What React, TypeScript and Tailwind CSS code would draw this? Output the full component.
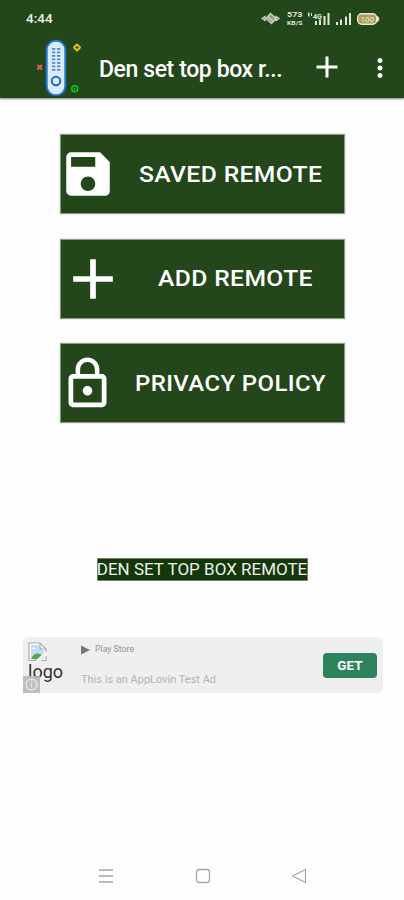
import type { ReactNode } from 'react';
import { MdAdd, MdLockOutline, MdMoreVert, MdSave } from 'react-icons/md';

interface MenuItem {
  label: string;
  icon: ReactNode;
  labelClass: string;
}

const menuItems: MenuItem[] = [
  {
    label: 'SAVED REMOTE',
    icon: <MdSave className="size-[58px] shrink-0" />,
    labelClass: 'ml-[22px] tracking-[0.35px] scale-x-[1.12]',
  },
  {
    label: 'ADD REMOTE',
    icon: <MdAdd className="size-[68px] shrink-0" />,
    labelClass: 'ml-[31px] tracking-[0.35px] scale-x-[1.12]',
  },
  {
    label: 'PRIVACY POLICY',
    icon: <MdLockOutline className="size-[57px] shrink-0" />,
    labelClass: 'ml-[19px] tracking-[0.35px] scale-x-[1.09]',
  },
];

function StatusIcons() {
  return (
    <svg width="122" height="18" viewBox="0 0 122 18" fill="#dfe6da">
      {/* vibrate */}
      <g fill="none" stroke="#cdd6c8" strokeWidth="1.3">
        <path d="M1 9.5l3-2v4zM18 9.5l-3-2v4z" />
        <path d="M9.500 4.500l5.500 5-4.500 5-5.500-5z" fill="#8d9d86" />
        <path d="M7 8l5 4" />
      </g>
      {/* network speed */}
      <g fontFamily="Roboto, sans-serif" fontWeight="700">
        <text x="26" y="8" fontSize="7.500" textLength="15.500" lengthAdjust="spacingAndGlyphs">573</text>
        <text x="26" y="16" fontSize="6" textLength="15.500" lengthAdjust="spacingAndGlyphs">KB/S</text>
        <text x="52" y="9.500" fontSize="7" textLength="9" lengthAdjust="spacingAndGlyphs">4G</text>
      </g>
      <path d="M47 3.500h1.500v4H47zM50 4h1v3h-1z" />
      {/* signal */}
      <path d="M54 12h2v4h-2zM58 10.500h2V16h-2zM62.500 7h2V16h-2zM66.500 4h2v12h-2z" />
      <path d="M75 13h2v3h-2zM79 10.500h2V16h-2zM84 7.500h2V16h-2zM88 4h2v12h-2z" />
      {/* battery */}
      <rect x="96.700" y="4.700" width="19" height="10.600" rx="4" fill="#a9a05c" stroke="#e9e9cf" strokeWidth="1.400" />
      <path d="M116 7c3 1 3 5 0 6z" fill="#e9e9cf" />
      <text x="99.500" y="13" fontSize="8" fill="#e5dfb0" textLength="13.500" fontFamily="Roboto, sans-serif" fontWeight="500">100</text>
    </svg>
  );
}

function RemoteLogo() {
  const rows = [48, 51.5, 55, 58.5, 62, 65.5, 69];
  return (
    <svg width="48" height="60" viewBox="35 38 48 60" fill="none">
      <rect x="46.700" y="40.700" width="18.600" height="54.600" rx="9" fill="#d9ecff" stroke="#2576cf" strokeWidth="2" />
      {rows.map((y) => (
        <path key={y} d={`M52 ${y + 0.8}h3.300M57 ${y + 0.8}h3.300`} stroke="#5389bd" strokeWidth="1.700" />
      ))}
      <circle cx="56" cy="81" r="4.200" stroke="#2467b4" strokeWidth="2" />
      <path d="M37.500 65l4.500 4.500M42 65l-4.500 4.500" stroke="#e65f5a" strokeWidth="1.900" />
      <path d="M77 44.500l3 3-3 3-3-3z" stroke="#e5bf18" strokeWidth="2" strokeLinejoin="round" />
      <circle cx="74.700" cy="88.700" r="3" stroke="#12c71d" strokeWidth="1.600" />
      <path d="M74.700 87.300l1.300 2.400h-2.600z" fill="#12c71d" />
    </svg>
  );
}

function BrokenImage() {
  return (
    <svg width="19" height="20" viewBox="0 0 19 20" fill="none">
      <path d="M1 1h11l6 6v12H1z" fill="#fff" />
      <path d="M3 3h8l5 6v8H3z" fill="#c3dcf5" />
      <path d="M3 17c3-6 8-7 11-3l-3 4z" fill="#58a744" />
      <path d="M4 7c1-2 3-2 4 0z" fill="#fff" />
      <path d="M7 19L18 9v4l-7 6z" fill="#f5f5f5" />
      <path d="M8 18.500H1V1h11l6 6v3M12 1v6h6M18 14v4.500h-5" stroke="#a9adb0" strokeWidth="1.200" />
    </svg>
  );
}

function AdBanner() {
  return (
    <div className="relative ml-[23px] mt-[56px] flex h-[56px] w-[360px] rounded-md bg-[#efefef]">
      <div className="w-[58px] pl-[5px] pt-[5px]">
        <BrokenImage />
        <p className="text-[18px] leading-[20px] text-[#303030]">logo</p>
      </div>
      <div className="flex-1">
        <div className="mt-[6px] flex h-[14px] items-center gap-[5px] text-[8.5px] tracking-[0.1px] text-[#8f8f8f]">
          <svg width="9" height="10" viewBox="0 0 9 10">
            <path d="M0 .5L9 5 0 9.500z" fill="#777" />
          </svg>
          Play Store
        </div>
        <p className="mt-[16px] whitespace-nowrap text-[11px] leading-[14px] text-[#b3b3b3]">
          This is an AppLovin Test Ad
        </p>
      </div>
      <button className="mr-[6px] mt-[16px] h-[25px] w-[54px] rounded bg-[#2d835b] text-[13.5px] font-bold leading-[25px] text-white">
        GET
      </button>
      {/* ad info badge */}
      <div className="absolute bottom-0 left-0 flex size-[17px] items-center justify-center bg-[#b9b9b9]/90">
        <svg width="13" height="13" viewBox="0 0 13 13" fill="none" stroke="#ececec" strokeWidth="1.200">
          <circle cx="6.500" cy="6.500" r="5.400" />
          <path d="M6.500 5.500v4M6.500 3v1.300" />
        </svg>
      </div>
    </div>
  );
}

export default function App() {
  return (
    <div className="flex h-[900px] w-[404px] flex-col overflow-hidden bg-[#fefefe] font-['Roboto',sans-serif]">
      <header className="h-[98px] shrink-0 bg-[#23461b] text-white shadow-[0_1px_2px_rgba(0,0,0,0.5)]">
        <div className="flex h-[38px] items-start justify-between pl-[26px] pr-[21px] pt-[9px]">
          <span className="text-[13.5px] font-medium leading-[18px] text-[#eef2ec]">4:44</span>
          <StatusIcons />
        </div>
        <div className="flex h-[60px] items-center">
          <div className="ml-[35px] w-[64px]">
            <RemoteLogo />
          </div>
          <h1 className="w-[198px] whitespace-nowrap pt-[3px] text-[23px] font-medium leading-[28px] tracking-[-0.4px]">
            Den set top box r...
          </h1>
          <MdAdd className="ml-[12px] size-[36px] -translate-y-px" />
          <MdMoreVert className="ml-[20px] size-[30px] shrink-0" />
        </div>
      </header>

      <nav className="ml-[60px] mt-[36px] flex w-[285px] flex-col gap-[24.5px]">
        {menuItems.map((item) => (
          <button
            key={item.label}
            className="flex h-[80px] items-center border border-[#8c9a87] bg-[#23461b] text-white shadow-[0_0_2px_rgba(0,0,0,0.25)]"
          >
            <span className="-ml-[2px] flex items-center">{item.icon}</span>
            <span className={`origin-left whitespace-nowrap text-[22px] font-medium ${item.labelClass}`}>
              {item.label}
            </span>
          </button>
        ))}
      </nav>

      <p className="mt-[134.500px] flex h-[23px] w-[211px] items-center justify-center self-center whitespace-nowrap border border-[#75816f] bg-[#143708] pt-[2px] text-[17px] text-[#f0f0f0]">
        DEN SET TOP BOX REMOTE
      </p>

      <AdBanner />

      <footer className="mt-auto flex h-[48px] items-center justify-between pl-[98px] pr-[97px]">
        <svg width="16" height="16" viewBox="0 0 16 16" stroke="#a5a5a5" strokeWidth="1.300">
          <path d="M1 2h14M1 8h14M1 14h14" />
        </svg>
        <svg width="16" height="16" viewBox="0 0 16 16" fill="none" stroke="#a5a5a5" strokeWidth="1.300">
          <rect x="1.500" y="1.500" width="13" height="13" rx="2.500" />
        </svg>
        <svg width="16" height="16" viewBox="0 0 16 16" fill="none" stroke="#a5a5a5" strokeWidth="1.200" strokeLinejoin="round">
          <path d="M14.500 1.500v13L1.500 8z" />
        </svg>
      </footer>
    </div>
  );
}
